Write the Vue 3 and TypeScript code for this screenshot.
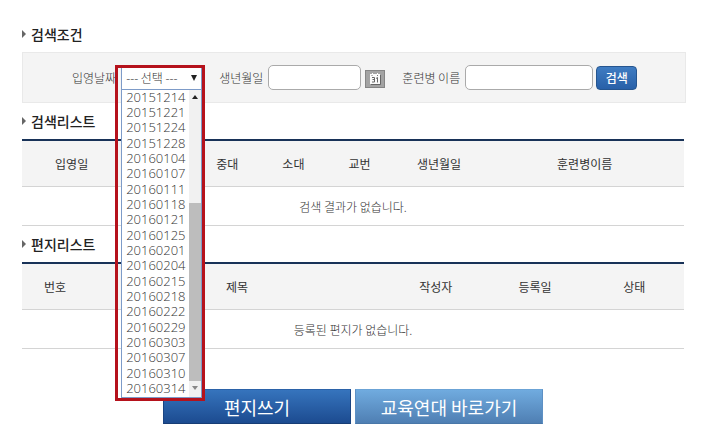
<script setup lang="ts">
import { ref } from 'vue'

interface Column {
  label: string
  width: string
}

const dates: string[] = [
  '20151214', '20151221', '20151224', '20151228', '20160104',
  '20160107', '20160111', '20160118', '20160121', '20160125',
  '20160201', '20160204', '20160215', '20160218', '20160222',
  '20160229', '20160303', '20160307', '20160310', '20160314',
]

const resultColumns: Column[] = [
  { label: '입영일', width: '15%' },
  { label: '', width: '11%' },
  { label: '중대', width: '10%' },
  { label: '소대', width: '10%' },
  { label: '교번', width: '10%' },
  { label: '생년월일', width: '14%' },
  { label: '훈련병이름', width: '30%' },
]

const letterColumns: Column[] = [
  { label: '번호', width: '10%' },
  { label: '제목', width: '45%' },
  { label: '작성자', width: '15%' },
  { label: '등록일', width: '15%' },
  { label: '상태', width: '15%' },
]

const enlistDate = ref('')
const birthDate = ref('')
const traineeName = ref('')
</script>

<template>
  <main class="page">
    <h2 class="heading">검색조건</h2>
    <form class="search" @submit.prevent>
      <div class="field">
        <label for="enlist">입영날짜</label>
        <div class="picker">
          <select id="enlist" v-model="enlistDate" class="select">
            <option value="">--- 선택 ---</option>
          </select>
          <svg class="caret" viewBox="0 0 6 6" aria-hidden="true"><path d="M0 0h6L3 6z" /></svg>
          <div class="popup">
            <ul class="options" role="listbox">
              <li v-for="d in dates" :key="d" role="option" @click="enlistDate = d">{{ d }}</li>
            </ul>
            <div class="scrollbar">
              <svg class="arrow" viewBox="0 0 12 16" aria-hidden="true"><path d="M3 9h6L6 5z" fill="#222" /></svg>
              <div class="thumb"></div>
              <svg class="arrow" viewBox="0 0 12 16" aria-hidden="true"><path d="M3 5h6L6 9z" fill="#888" /></svg>
            </div>
          </div>
          <div class="frame"></div>
        </div>
      </div>
      <div class="field">
        <label for="birth">생년월일</label>
        <input id="birth" v-model="birthDate" class="text birth" type="text" />
        <button class="calendar" type="button">
          <svg viewBox="0 0 20 18" aria-hidden="true">
            <rect x="0.5" y="0.5" width="19" height="17" fill="#a3a3a3" stroke="#858585" />
            <path d="M6 14.5h9.5V5" fill="none" stroke="#666" />
            <path d="M5 4h2V3h1v1h4V3h1v1h2v10H5z" fill="#fafafa" />
            <path d="M7 5v1M12.5 5v1" stroke="#777" />
            <path d="M7 7.5h2.5v4.5H7M7.5 9.5h2M11 8.5l1.500-1v5" fill="none" stroke="#666" />
          </svg>
        </button>
      </div>
      <div class="field">
        <label for="name">훈련병 이름</label>
        <input id="name" v-model="traineeName" class="text name" type="text" />
        <button class="submit" type="submit">검색</button>
      </div>
    </form>

    <h2 class="heading">검색리스트</h2>
    <table class="list">
      <colgroup>
        <col v-for="(c, i) in resultColumns" :key="i" :style="{ width: c.width }" />
      </colgroup>
      <thead>
        <tr><th v-for="(c, i) in resultColumns" :key="i">{{ c.label }}</th></tr>
      </thead>
      <tbody>
        <tr><td :colspan="resultColumns.length">검색 결과가 없습니다.</td></tr>
      </tbody>
    </table>

    <h2 class="heading">편지리스트</h2>
    <table class="list">
      <colgroup>
        <col v-for="(c, i) in letterColumns" :key="i" :style="{ width: c.width }" />
      </colgroup>
      <thead>
        <tr><th v-for="(c, i) in letterColumns" :key="i">{{ c.label }}</th></tr>
      </thead>
      <tbody>
        <tr><td :colspan="letterColumns.length">등록된 편지가 없습니다.</td></tr>
      </tbody>
    </table>

    <div class="actions">
      <button class="action write" type="button">편지쓰기</button>
      <a class="action visit" href="#">교육연대 바로가기</a>
    </div>
  </main>
</template>

<style>
body {
  margin: 0;
  background: #fff;
}
</style>

<style scoped>
.page,
.page button,
.page input,
.page select {
  font-family: "Noto Sans CJK KR", "Noto Sans", sans-serif;
  font-size: 12px;
  box-sizing: border-box;
}
.page {
  padding: 16px 36px 10px 22px;
  color: #333;
}
.heading {
  display: flex;
  align-items: center;
  gap: 5px;
  height: 36px;
  margin: 0;
  font-size: 14px;
  font-weight: 500;
  color: #222;
}
.heading::before {
  content: "";
  border: 4px solid transparent;
  border-left-color: #666;
  border-right-width: 0;
}
.search {
  display: flex;
  align-items: center;
  gap: 17px;
  height: 51px;
  box-sizing: border-box;
  margin-right: -2px;
  padding-left: 49px;
  border: 1px solid #e9e9e9;
  background: #f4f4f4;
}
.field {
  display: flex;
  align-items: center;
  white-space: nowrap;
}
.field label {
  margin-right: 5px;
  font-weight: 300;
}
.picker {
  position: relative;
}
.page .select {
  display: block;
  width: 81px;
  height: 24px;
  padding: 0 0 0 4px;
  border: 1px solid #7d9bc8;
  border-radius: 0;
  background: #fff;
  color: #333;
  font-weight: 300;
  appearance: none;
}
.caret {
  position: absolute;
  top: 9px;
  right: 5px;
  width: 6px;
  height: 6px;
  fill: #222;
}
.popup {
  position: absolute;
  z-index: 2;
  top: 23px;
  left: 0;
  display: flex;
  width: 81px;
  height: 309px;
  box-sizing: border-box;
  border: 1px solid #7d9bc8;
  background: #fff;
}
.options {
  display: grid;
  flex: 1;
  grid-auto-rows: 1fr;
  margin: 0;
  padding: 0 0 0 4px;
  list-style: none;
  font-family: "Open Sans", "Noto Sans", sans-serif;
  font-size: 13px;
  font-weight: 300;
  line-height: 15px;
}
.scrollbar {
  display: flex;
  flex-direction: column;
  width: 12px;
  background: #f1f1f1;
}
.arrow {
  height: 16px;
}
.thumb {
  flex: 1;
  margin-top: 97px;
  background: #bdbdbd;
}
.frame {
  position: absolute;
  z-index: 3;
  top: -1px;
  left: -6px;
  width: 90px;
  height: 336px;
  box-sizing: border-box;
  border: 3px solid #b5121c;
  pointer-events: none;
}
.text {
  height: 25px;
  padding: 0 6px;
  border: 1px solid #aaa;
  border-radius: 5px;
  background: #fff;
}
.birth {
  width: 93px;
}
.name {
  width: 128px;
}
.calendar {
  width: 20px;
  height: 18px;
  margin: 3px 0 0 4px;
  padding: 0;
  border: 0;
  background: none;
}
.calendar svg {
  display: block;
}
.submit {
  width: 41px;
  height: 24px;
  margin-left: 3px;
  padding: 0;
  border: 1px solid #25558f;
  border-radius: 4px;
  background: linear-gradient(#3f7cc2, #2860a8);
  color: #fff;
  font-weight: 500;
}
.list {
  width: 100%;
  table-layout: fixed;
  border-collapse: separate;
  border-spacing: 0;
  border-top: 2px solid #183258;
}
.list th,
.list td {
  box-sizing: border-box;
  padding: 0;
  border-bottom: 1px solid #d4d4d4;
  text-align: center;
}
.list th {
  height: 46px;
  background: #f4f4f4;
  font-weight: 400;
}
.list td {
  height: 39px;
  font-weight: 300;
}
.actions {
  display: flex;
  justify-content: center;
  gap: 4px;
  margin-top: 40px;
}
.page .action {
  display: flex;
  align-items: center;
  justify-content: center;
  width: 188px;
  height: 35px;
  box-sizing: border-box;
  border: 1px solid;
  font-size: 18px;
  font-weight: 400;
  color: #fff;
  text-decoration: none;
}
.page .write {
  border-color: #2b62a8 #1b4583 #173d75;
  background: linear-gradient(#3674bd, #1c4b90);
}
.page .visit {
  border-color: #6ba3d6 #5d90c4 #4977a8;
  background: linear-gradient(#70abdf, #4f7fb3);
}
</style>
